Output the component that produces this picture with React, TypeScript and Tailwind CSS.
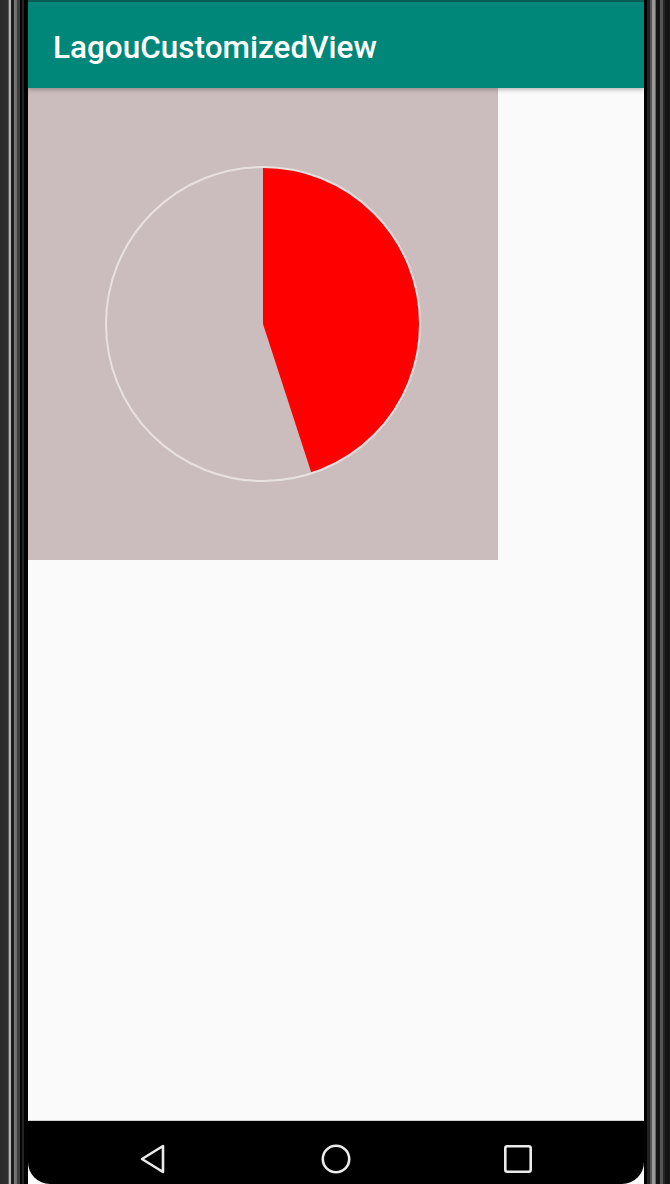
// Android emulator screen: toolbar, a custom pie view and the system nav bar
const SWEEP = 162; // degrees of the red slice, starting at 12 o'clock

function Pie() {
  const cx = 235;
  const cy = 236;
  const r = 157;
  const end = ((SWEEP - 90) * Math.PI) / 180;
  const ex = cx + r * Math.cos(end);
  const ey = cy + r * Math.sin(end);
  const large = SWEEP > 180 ? 1 : 0;
  return (
    <svg width="470" height="472" viewBox="0 0 470 472" className="block">
      <path d={`M${cx} ${cy} L${cx} ${cy - r} A${r} ${r} 0 ${large} 1 ${ex} ${ey} Z`} fill="#ff0000" />
      <circle cx={cx} cy={cy} r={r} fill="none" stroke="#e9e1e1" strokeWidth="2" />
    </svg>
  );
}

function NavBar() {
  return (
    <div className="h-[63px] bg-black rounded-b-[22px] flex justify-center pt-[22px]">
      <div className="w-[182px] flex justify-center">
        <svg width="30" height="32" viewBox="0 0 30 32">
          <path d="M24 3 L24 29 L3 16 Z" fill="none" stroke="#ebebeb" strokeWidth="2.6" strokeLinejoin="round" />
        </svg>
      </div>
      <div className="w-[182px] flex justify-center">
        <svg width="32" height="32" viewBox="0 0 32 32">
          <circle cx="16" cy="16" r="13.2" fill="none" stroke="#ebebeb" strokeWidth="2.6" />
        </svg>
      </div>
      <div className="w-[182px] flex justify-center">
        <svg width="32" height="32" viewBox="0 0 32 32">
          <rect x="3.3" y="3.3" width="25.4" height="25.4" rx="2" fill="none" stroke="#ebebeb" strokeWidth="2.6" />
        </svg>
      </div>
    </div>
  );
}

export default function App() {
  return (
    <div className="w-[670px] h-[1184px] flex bg-[#080808] overflow-hidden" style={{ fontFamily: "Roboto, 'Noto Sans', sans-serif" }}>
      {/* left bezel */}
      <div className="w-[28px] h-full bg-[linear-gradient(to_right,#2b2b2b_0px,#2f2f2f_8px,#5a5a5a_8px,#5a5a5a_9px,#b5b5b5_9px,#b5b5b5_11px,#1c1c1c_11px,#1c1c1c_14px,#7a7a7a_14px,#6a6a6a_17px,#3e3e3e_17px,#3e3e3e_20px,#050505_20px,#050505_22px,#232323_22px,#232323_24px,#020202_24px,#020202_28px)]" />

      <div className="w-[616px] h-full flex flex-col bg-[#fafafa]">
        <div className="relative z-10 h-[88px] bg-[#00877a] border-t-2 border-[#0a5e57] shadow-[0_2px_4px_rgba(0,0,0,0.25)] flex items-center pl-[25px] pt-[5px]">
          <span className="text-white text-[31.5px] font-medium">LagouCustomizedView</span>
        </div>

        <div className="flex-1">
          <div className="w-[470px] h-[472px] bg-[#cbbdbd]">
            <Pie />
          </div>
        </div>

        <div className="h-px bg-[#d0d0d0]" />
        <NavBar />
      </div>

      {/* right bezel */}
      <div className="w-[26px] h-full bg-[linear-gradient(to_right,#020202_0px,#020202_3px,#222_3px,#222_6px,#555_6px,#555_8px,#9a9a9a_8px,#9a9a9a_11px,#666_11px,#666_12px,#151515_12px,#151515_16px,#585858_16px,#585858_19px,#262626_19px,#262626_21px,#141414_21px,#141414_26px)]" />
    </div>
  );
}
